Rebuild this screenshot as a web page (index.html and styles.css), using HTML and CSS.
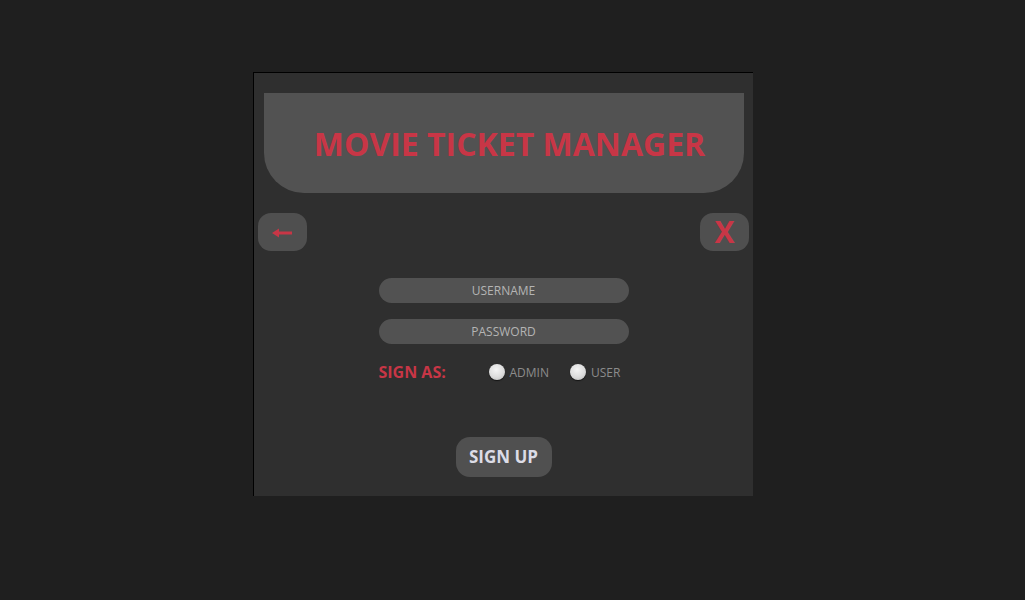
FILE: index.html
```html
<!DOCTYPE html>
<html>
<head>
<meta charset="utf-8">
<link rel="stylesheet" href="styles.css">
</head>
<body>
<div class="desktop">
  <div class="window">
    <div class="header"><h1 class="title">MOVIE TICKET MANAGER</h1></div>
    <div class="toolbar">
      <button class="tool-btn back" aria-label="Back">
        <svg class="arrow" width="20" height="10" viewBox="0 0 20 10"><path d="M0 5 L7 0.5 L7 3.4 L20 3.4 L20 6.6 L7 6.6 L7 9.5 Z" fill="#c83646"/></svg>
      </button>
      <button class="tool-btn close">X</button>
    </div>
    <form class="form">
      <div class="field">USERNAME</div>
      <div class="field">PASSWORD</div>
      <div class="sign-row">
        <span class="sign-label">SIGN AS:</span>
        <label class="radio"><span class="dot"></span>ADMIN</label>
        <label class="radio"><span class="dot"></span>USER</label>
      </div>
      <button type="button" class="signup">SIGN UP</button>
    </form>
  </div>
</div>
</body>
</html>
```
FILE: styles.css
```css
html, body {
  margin: 0;
  padding: 0;
  background: #1f1f1f;
  font-family: "Open Sans", "Liberation Sans", sans-serif;
}
.desktop {
  height: 600px;
  padding: 72px 0 0 253px;
  box-sizing: border-box;
}
.window {
  width: 500px;
  height: 424px;
  box-sizing: border-box;
  background: #2f2f2f;
  border-top: 1px solid #000;
  border-left: 1px solid #000;
  padding: 20px 0 0 0;
  display: flex;
  flex-direction: column;
}
.header {
  margin: 0 9px 0 10px;
  height: 100px;
  background: #525252;
  border-radius: 0 0 40px 40px;
  display: flex;
  align-items: center;
  justify-content: center;
}
.title {
  margin: 0;
  padding-left: 11px;
  color: #c83646;
  font-size: 32px;
  font-weight: 700;
  letter-spacing: 0;
}
.toolbar {
  display: flex;
  justify-content: space-between;
  margin: 20px 4px 0 4px;
}
.tool-btn {
  width: 49px;
  height: 38px;
  border: none;
  border-radius: 13px;
  background: #4f4f4f;
  color: #c83646;
  font-family: "Open Sans", "Liberation Sans", sans-serif;
  font-weight: 700;
  padding: 0;
  display: flex;
  align-items: center;
  justify-content: center;
}
.back { padding: 0 2px 0 0; }
.arrow { display: block; margin-top: 2px; }
.close { font-size: 30px; line-height: 1; }
.form {
  margin: 27px 0 0 0;
  display: flex;
  flex-direction: column;
  align-items: center;
}
.field {
  width: 250px;
  height: 25px;
  border-radius: 13px;
  background: #525252;
  color: #b4b4b4;
  font-size: 12px;
  display: flex;
  align-items: center;
  justify-content: center;
  margin-bottom: 16px;
}
.sign-row {
  width: 250px;
  display: flex;
  align-items: center;
  margin-top: 2px;
  height: 20px;
}
.sign-label {
  color: #c83646;
  font-size: 16px;
  font-weight: 700;
  width: 110px;
  flex-shrink: 0;
}
.radio {
  display: flex;
  align-items: center;
  flex-shrink: 0;
  color: #8c8c8c;
  font-size: 12px;
  margin-right: 21px;
}
.radio:last-child { margin-right: 0; }
.dot {
  width: 16px;
  height: 16px;
  border-radius: 50%;
  background: radial-gradient(circle at 45% 35%, #f4f4f4 0%, #dcdcdc 55%, #b8b8b8 100%);
  box-shadow: 0 1px 1px rgba(0,0,0,0.6);
  margin-right: 5px;
}
.signup {
  margin-top: 55px;
  width: 96px;
  height: 40px;
  border: none;
  border-radius: 14px;
  background: #505050;
  color: #dcdce6;
  font-family: "Open Sans", "Liberation Sans", sans-serif;
  font-size: 17px;
  font-weight: 700;
  padding: 0 0 2px 0;
}
```
